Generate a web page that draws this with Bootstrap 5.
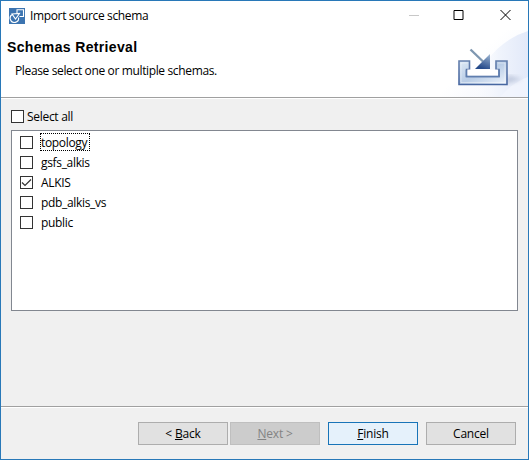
<!DOCTYPE html>
<html lang="en">
<head>
<meta charset="utf-8">
<meta name="viewport" content="width=device-width, initial-scale=1">
<title>Import source schema</title>
<link href="https://cdn.jsdelivr.net/npm/bootstrap@5.3.0/dist/css/bootstrap.min.css" rel="stylesheet">
<style>
body{font:12px/16px "Open Sans","Noto Sans",sans-serif;color:#000;background:#f0f0f0}
.window{width:529px;height:460px;border:1px solid #2878b8;background:#f0f0f0}
.banner{height:97px;border-bottom:1px solid #a0a0a0;background:#fff}
.banner-art{top:0;right:0}
.titlebar{height:30px;padding:0 0 0 8px}
.titlebar .caption{letter-spacing:-.36px;margin-left:5px}
.winbtn{width:45.5px;height:30px}
.heading{font:bold 14px/16px "Liberation Sans",sans-serif;letter-spacing:.35px;padding-left:6px;margin-top:8px}
.sub{padding-left:14px;margin-top:8px;letter-spacing:-.36px}
.work{padding:11px 10px 0;height:308px;border-top:1px solid #fff}
.form-check-input.tick{width:13px;height:13px;margin:0;border:1px solid #333;border-radius:0;background-color:#fff;flex:none}
.form-check-input.tick:checked{background-color:#fff;border-color:#333;background-size:11px 11px;background-image:url("data:image/svg+xml,%3Csvg xmlns='http://www.w3.org/2000/svg' viewBox='0 0 11 11'%3E%3Cpath d='M1 5.5L4 8.5L10 2.5' fill='none' stroke='%23333' stroke-width='1.2'/%3E%3C/svg%3E")}
.all{height:13px}
.all label{margin-left:3px;letter-spacing:-.3px}
.schemas{height:181px;margin-top:7px;border:1px solid #828790;background:#fff;padding:1px 0 0 8px}
.schemas li{height:20px}
.schemas label{margin-left:7px;padding:0 2px 0 0;height:18px;line-height:17px;border:1px dotted transparent;letter-spacing:-.33px}
.schemas .current{border-color:#000}
.actions{border-top:1px solid #a0a0a0;box-shadow:inset 0 1px #fff;height:53px;padding:15px 12px 0 0}
.btn.act{width:90px;height:23px;padding:0;font-size:12px;line-height:21px;letter-spacing:-.2px;border:1px solid #adadad;border-radius:0;background:#e1e1e1;color:#000}
.btn.act:disabled{background:#ccc;border-color:#bfbfbf;color:#838383;opacity:1}
.btn.act.primary{background:#e5f1fb;border-color:#1874b8}
.pair{gap:2px}
</style>
<script src="https://cdn.jsdelivr.net/npm/bootstrap@5.3.0/dist/js/bootstrap.bundle.min.js"></script>
</head>
<body class="overflow-hidden">
<main class="window d-flex flex-column">
  <header class="banner position-relative flex-shrink-0">
    <svg class="banner-art position-absolute" width="129" height="96" viewBox="399 1 129 96" aria-hidden="true">
      <defs>
        <linearGradient id="wash" x1="0" y1="0" x2="1" y2=".8"><stop offset=".45" stop-color="#f3f6fd" stop-opacity="0"/><stop offset="1" stop-color="#edf1fb"/></linearGradient>
        <linearGradient id="arc" x1="0" y1="0" x2="1" y2="0"><stop offset="0" stop-color="#fff" stop-opacity="0"/><stop offset=".5" stop-color="#f0f4fc"/><stop offset="1" stop-color="#e2e9f9"/></linearGradient>
        <linearGradient id="tray" x1="0" y1="0" x2="1" y2="1"><stop offset="0" stop-color="#dce8f5"/><stop offset=".5" stop-color="#b9cde6"/><stop offset="1" stop-color="#eef4fc"/></linearGradient>
        <linearGradient id="edge" x1="0" y1="0" x2="0" y2="1"><stop offset="0" stop-color="#6580ad"/><stop offset="1" stop-color="#4767a1"/></linearGradient>
        <linearGradient id="head" x1="1" y1="0" x2=".6" y2="1"><stop offset="0" stop-color="#a0b8d4"/><stop offset="1" stop-color="#264b8b"/></linearGradient>
        <filter id="soft"><feGaussianBlur stdDeviation="2"/></filter>
      </defs>
      <path d="M440 30H528V97H440Z" fill="url(#wash)"/>
      <path d="M470 97C480 62 500 40 528 31V97Z" fill="url(#arc)"/>
      <path d="M500 97C508 88 518 80 528 77V97Z" fill="#f4f7fd" opacity=".7"/>
      <path d="M504 85L522 79L508 75Z" fill="#a7b2cc" opacity=".6" filter="url(#soft)"/>
      <path d="M459 61H469.500V69.500H466.500V76.500H499V69.500H496V61H507V84.500H459Z" fill="url(#tray)" stroke="url(#edge)" stroke-width="1.6"/>
      <path d="M467.300 69.500H498.200V75.700H467.300Z" fill="#fff"/>
      <path d="M466.500 70V76.500H499V70" fill="none" stroke="#5f7eae" stroke-width="1.5"/>
      <path d="M461 82.500V63H467.500M498 63H505V82.500H461" fill="none" stroke="#fff" stroke-opacity=".4"/>
      <path d="M470.500 49.500L483 61.500" stroke="#7e97b0" stroke-width="2.4"/>
      <path d="M490 54V69H475Z" fill="url(#head)"/>
    </svg>
    <div class="titlebar d-flex align-items-center position-relative">
      <svg width="16" height="16" viewBox="0 0 16 16" aria-hidden="true"><path fill="#3c74b0" d="M0 0H16V16H0Z"/><g fill="none" stroke="#fff" stroke-width="1.1"><path d="M8 5V1.800H14.500V8.500H10.500"/><path d="M4 6.300A4.200 4.200 0 1 0 9.500 9.500"/><path d="M3 6L10.500 5.500L6.500 11Z"/></g></svg>
      <span class="caption">Import source schema</span>
      <div class="d-flex ms-auto">
        <svg class="winbtn" viewBox="0 0 45.5 30" aria-label="Minimize"><path d="M17 14.500H27" stroke="#c8c8c8"/></svg>
        <svg class="winbtn" viewBox="0 0 45.5 30" aria-label="Maximize"><path d="M17 9.500H26V18.500H17Z" fill="none" stroke="#000"/></svg>
        <svg class="winbtn" viewBox="0 0 45.5 30" aria-label="Close"><path d="M17.500 9L27.500 19M27.500 9L17.500 19" stroke="#000"/></svg>
      </div>
    </div>
    <h1 class="heading mb-0 position-relative">Schemas Retrieval</h1>
    <p class="sub mb-0 position-relative">Please select one or multiple schemas.</p>
  </header>
  <section class="work flex-shrink-0">
    <div class="all d-flex align-items-center"><input class="form-check-input tick" type="checkbox" id="all"><label for="all">Select all</label></div>
    <ul class="schemas list-unstyled mb-0">
      <li class="d-flex align-items-center"><input class="form-check-input tick" type="checkbox" id="s1"><label class="current" for="s1">topology</label></li>
      <li class="d-flex align-items-center"><input class="form-check-input tick" type="checkbox" id="s2"><label for="s2">gsfs_alkis</label></li>
      <li class="d-flex align-items-center"><input class="form-check-input tick" type="checkbox" id="s3" checked><label for="s3">ALKIS</label></li>
      <li class="d-flex align-items-center"><input class="form-check-input tick" type="checkbox" id="s4"><label for="s4">pdb_alkis_vs</label></li>
      <li class="d-flex align-items-center"><input class="form-check-input tick" type="checkbox" id="s5"><label for="s5">public</label></li>
    </ul>
  </section>
  <footer class="actions d-flex justify-content-end gap-2 flex-shrink-0">
    <div class="pair d-flex"><button class="btn act" type="button">&lt; <u>B</u>ack</button><button class="btn act" type="button" disabled><u>N</u>ext &gt;</button></div>
    <button class="btn act primary" type="button"><u>F</u>inish</button>
    <button class="btn act" type="button">Cancel</button>
  </footer>
</main>
</body>
</html>
